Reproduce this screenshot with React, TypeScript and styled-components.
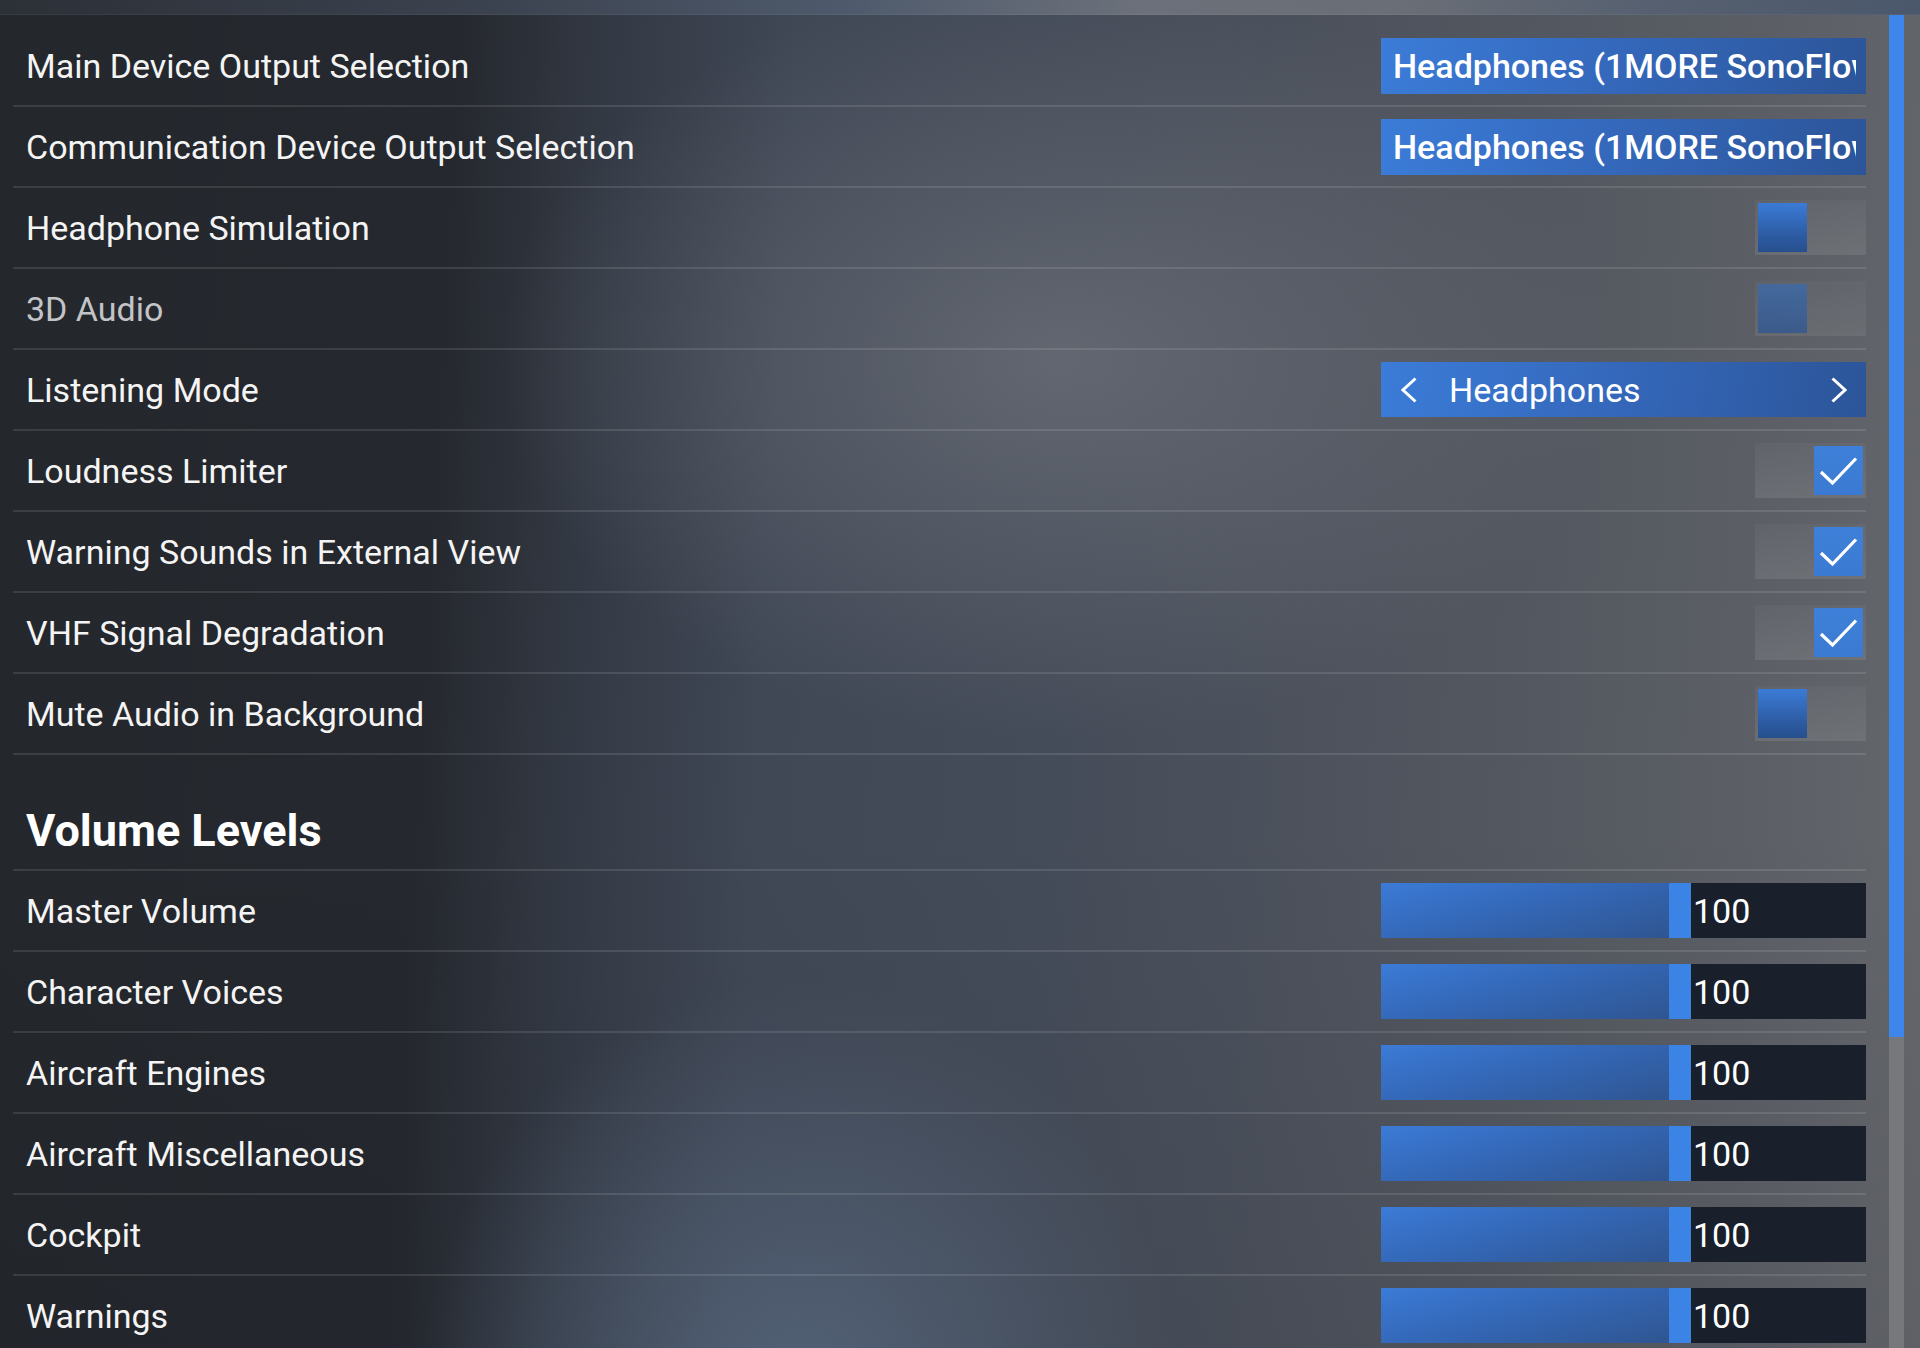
import React from "react";
import styled, { createGlobalStyle } from "styled-components";

const GlobalStyle = createGlobalStyle`
  html, body { margin: 0; padding: 0; }
  body { font-family: Roboto, "Noto Sans", "Liberation Sans", sans-serif; background: #25282e; }
  * { box-sizing: border-box; }
`;

const Page = styled.div`
  width: 100vw;
  height: 100vh;
  overflow: hidden;
  display: flex;
  flex-direction: column;
  background:
    radial-gradient(ellipse 380px 420px at 800px 1400px, rgba(86, 102, 124, 0.9), rgba(86, 102, 124, 0) 100%),
    radial-gradient(ellipse 560px 380px at 1060px 360px, rgba(110, 114, 122, 0.7), rgba(110, 114, 122, 0) 100%),
    linear-gradient(180deg, rgba(0, 0, 0, 0) 0%, rgba(0, 0, 0, 0) 60%, rgba(10, 14, 22, 0.08) 100%),
    linear-gradient(93deg, #24272c 0%, #25282e 23%, #343a45 31%, #404755 40%, #454c59 55%, #4e535d 70%, #575b62 84%, #5f6268 94%, #66686d 100%);
`;

const TopBand = styled.div`
  height: 15px;
  flex: none;
  background: linear-gradient(90deg, #2c3037 0%, #3c4350 26%, #4e5a6c 44%, #6b707a 59%, #6a6e76 73%, #566070 86%, #4b576b 100%);
  border-bottom: 1px solid rgba(255, 255, 255, 0.05);
`;

const Body = styled.div`
  flex: 1;
  display: flex;
  min-height: 0;
`;

const Content = styled.div`
  width: 1866px;
  flex: none;
  padding: 11px 0 0 13px;
  overflow: hidden;
`;

const ScrollColumn = styled.div`
  flex: 1;
  padding-left: 23px;
  display: flex;
`;

const ScrollTrack = styled.div`
  width: 15px;
  height: 100%;
  background: #76787c;
`;

const ScrollThumb = styled.div`
  width: 100%;
  height: 1022px;
  background: #3c86ec;
`;

const Row = styled.div`
  height: 81px;
  display: flex;
  align-items: center;
  justify-content: space-between;
  padding-left: 13px;
  border-bottom: 2px solid rgba(255, 255, 255, 0.11);
`;

const Label = styled.span<{ $disabled?: boolean }>`
  font-size: 34px;
  font-weight: 400;
  color: ${(p) => (p.$disabled ? "#c2c4c7" : "#f4f4f4")};
  white-space: nowrap;
`;

const Heading = styled.div`
  height: 116px;
  padding: 52px 0 14px 13px;
  border-bottom: 2px solid rgba(255, 255, 255, 0.11);
  font-size: 45px;
  line-height: 48px;
  font-weight: 700;
  color: #ffffff;
`;

const blueGrad = "linear-gradient(100deg, #3b7cd8 0%, #3569bd 45%, #2c5599 100%)";

const DeviceButton = styled.div`
  width: 485px;
  height: 56px;
  background: ${blueGrad};
  padding: 0 10px 0 12px;
  display: flex;
  align-items: center;
  overflow: hidden;
`;

const DeviceText = styled.span`
  font-size: 34px;
  font-weight: 500;
  color: #ffffff;
  white-space: nowrap;
  overflow: hidden;
  text-overflow: clip;
`;

const Selector = styled.div`
  width: 485px;
  height: 55px;
  background: ${blueGrad};
  display: flex;
  align-items: center;
  padding: 0 19px 0 20px;
  gap: 32px;
`;

const SelectorText = styled.span`
  flex: 1;
  font-size: 34px;
  font-weight: 400;
  color: #ffffff;
  white-space: nowrap;
`;

const Chevron = styled.svg`
  width: 16px;
  height: 26px;
  flex: none;
`;

const ToggleBox = styled.div<{ $on: boolean; $disabled?: boolean }>`
  width: 111px;
  height: 55px;
  padding: 3px;
  display: flex;
  justify-content: ${(p) => (p.$on ? "flex-end" : "flex-start")};
  background: linear-gradient(180deg, rgba(255, 255, 255, 0.03) 0%, rgba(255, 255, 255, 0.09) 100%);
  opacity: ${(p) => (p.$disabled ? 0.8 : 1)};
`;

const Knob = styled.div<{ $on: boolean; $disabled?: boolean }>`
  width: 49px;
  height: 49px;
  display: flex;
  align-items: center;
  justify-content: center;
  background: ${(p) =>
    p.$disabled
      ? "linear-gradient(180deg, #3f6cab 0%, #345a94 100%)"
      : p.$on
      ? "linear-gradient(180deg, #3e80d9 0%, #3b7ad2 100%)"
      : "linear-gradient(180deg, #3b7bd6 0%, #2c5aa0 70%, #274f8e 100%)"};
`;

const SliderBox = styled.div`
  width: 485px;
  height: 55px;
  display: flex;
`;

const SliderTrack = styled.div`
  width: 310px;
  display: flex;
  background: rgba(20, 26, 36, 0.6);
`;

const SliderFill = styled.div`
  height: 100%;
  background: linear-gradient(165deg, #3b7bd7 0%, #3468b8 45%, #2f5591 100%);
`;

const SliderThumb = styled.div`
  width: 22px;
  height: 100%;
  flex: none;
  background: #3b84e6;
`;

const ValueBox = styled.div`
  flex: 1;
  background: #19202b;
  display: flex;
  align-items: center;
  padding-left: 2px;
  font-size: 34px;
  font-weight: 400;
  color: #ffffff;
`;

function Toggle({ on, disabled }: { on: boolean; disabled?: boolean }) {
  return (
    <ToggleBox $on={on} $disabled={disabled}>
      <Knob $on={on} $disabled={disabled}>
        {on && (
          <svg width="49" height="49" viewBox="0 0 49 49">
            <polyline points="7,26 18.5,37 42,12.5" fill="none" stroke="#ffffff" strokeWidth="3.2" />
          </svg>
        )}
      </Knob>
    </ToggleBox>
  );
}

function Slider({ value }: { value: number }) {
  const fillW = Math.round(((310 - 22) * value) / 100);
  return (
    <SliderBox>
      <SliderTrack>
        <SliderFill style={{ width: fillW }} />
        <SliderThumb />
      </SliderTrack>
      <ValueBox>{value}</ValueBox>
    </SliderBox>
  );
}

const volumes = [
  "Master Volume",
  "Character Voices",
  "Aircraft Engines",
  "Aircraft Miscellaneous",
  "Cockpit",
  "Warnings",
];

export default function App() {
  return (
    <>
      <GlobalStyle />
      <Page>
        <TopBand />
        <Body>
          <Content>
            <Row>
              <Label>Main Device Output Selection</Label>
              <DeviceButton>
                <DeviceText>Headphones (1MORE SonoFlow)</DeviceText>
              </DeviceButton>
            </Row>
            <Row>
              <Label>Communication Device Output Selection</Label>
              <DeviceButton>
                <DeviceText>Headphones (1MORE SonoFlow)</DeviceText>
              </DeviceButton>
            </Row>
            <Row>
              <Label>Headphone Simulation</Label>
              <Toggle on={false} />
            </Row>
            <Row>
              <Label $disabled>3D Audio</Label>
              <Toggle on={false} disabled />
            </Row>
            <Row>
              <Label>Listening Mode</Label>
              <Selector>
                <Chevron viewBox="0 0 16 26">
                  <polyline points="14.5,1.5 2,13 14.5,24.5" fill="none" stroke="#ffffff" strokeWidth="3" />
                </Chevron>
                <SelectorText>Headphones</SelectorText>
                <Chevron viewBox="0 0 16 26">
                  <polyline points="1.5,1.5 14,13 1.5,24.5" fill="none" stroke="#ffffff" strokeWidth="3" />
                </Chevron>
              </Selector>
            </Row>
            <Row>
              <Label>Loudness Limiter</Label>
              <Toggle on />
            </Row>
            <Row>
              <Label>Warning Sounds in External View</Label>
              <Toggle on />
            </Row>
            <Row>
              <Label>VHF Signal Degradation</Label>
              <Toggle on />
            </Row>
            <Row>
              <Label>Mute Audio in Background</Label>
              <Toggle on={false} />
            </Row>
            <Heading>Volume Levels</Heading>
            {volumes.map((v) => (
              <Row key={v}>
                <Label>{v}</Label>
                <Slider value={100} />
              </Row>
            ))}
          </Content>
          <ScrollColumn>
            <ScrollTrack>
              <ScrollThumb />
            </ScrollTrack>
          </ScrollColumn>
        </Body>
      </Page>
    </>
  );
}
